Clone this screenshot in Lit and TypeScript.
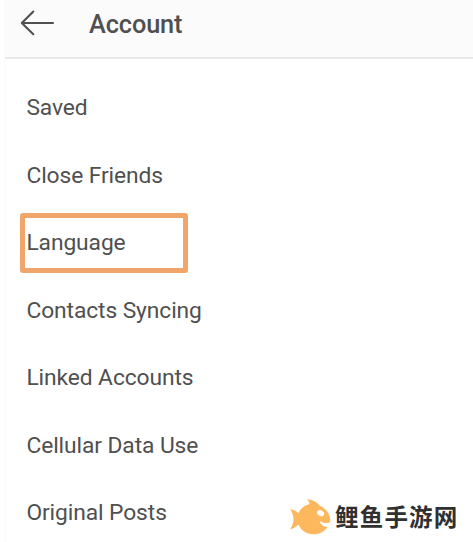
import { LitElement, html, css } from "lit";
import { customElement, property } from "lit/decorators.js";
import { classMap } from "lit/directives/class-map.js";

@customElement("settings-header")
class SettingsHeader extends LitElement {
  @property() heading = "";

  static styles = css`
    :host {
      display: flex;
      align-items: center;
      box-sizing: border-box;
      height: 59px;
      padding: 0 0 11px 15px;
      background: #fbfbfb;
      border-bottom: 2px solid #e9e9e8;
    }
    .back {
      width: 36px;
      height: 28px;
      flex: none;
    }
    .title {
      margin: 3px 0 0 33px;
      font: 500 25.3px/30px Roboto, sans-serif;
      letter-spacing: -0.1px;
      color: #505050;
    }
  `;

  render() {
    return html`
      <svg class="back" viewBox="0 0 36 28" fill="none" stroke="#505050" stroke-width="2.1"
        stroke-linecap="round" stroke-linejoin="round">
        <path d="M33 14H2M13.3 2.6L1.8 14L13.3 25.2" />
      </svg>
      <div class="title">${this.heading}</div>
    `;
  }
}

@customElement("site-mark")
class SiteMark extends LitElement {
  static styles = css`
    :host {
      display: flex;
      align-items: center;
    }
    .fish {
      width: 42px;
      height: 38px;
      flex: none;
    }
    .name {
      margin: -2px 0 0 4px;
      font: 700 23.5px/30px "Noto Sans CJK SC", sans-serif;
      letter-spacing: 1.2px;
      color: #303030;
      white-space: nowrap;
    }
  `;

  render() {
    return html`
      <svg class="fish" viewBox="0 0 42 38">
        <path fill="#fdb75c"
          d="M1 11.2C4.6 11.5 7.5 13.2 9.5 15.2C11.5 10.5 15.5 7.3 20.3 6.3C20.6 4.5 19.6 2.7 18 1.2C24 1.5 28.3 4.2 30.6 7.7C36.5 10.2 40.8 15 41.2 21.5L41.1 24.6C37.6 25.6 33.4 25 30.6 22.8C31.2 26.4 34.4 29 38.6 29C35.6 33.6 30.5 36.4 24.5 36.3C17.5 36.2 11.8 32.5 9.4 26.6C7.2 28.9 4.4 30.7 1.2 31.3C3.6 27.4 4.5 23.8 4.5 20.9C4.500 17.500 3.300 14.200 1 11.200Z" />
        <ellipse cx="31.600" cy="15.200" rx="3.700" ry="2.800" transform="rotate(30 31.600 15.200)" fill="#fff" />
      </svg>
      <div class="name">鲤鱼手游网</div>
    `;
  }
}

@customElement("app-root")
class AppRoot extends LitElement {
  static styles = css`
    :host {
      display: block;
      position: relative;
      box-sizing: border-box;
      height: 542px;
      padding-left: 4px;
      overflow: hidden;
      background: #fff;
    }
    .panel {
      height: 100%;
      box-sizing: border-box;
      border-left: 1px solid #fafafa;
    }
    .list {
      display: flex;
      flex-direction: column;
      padding-top: 15.4px;
    }
    .row {
      display: flex;
      align-items: center;
      box-sizing: border-box;
      height: 67.5px;
      flex: none;
      padding-left: 21.4px;
      font: 400 22.8px/30px Roboto, sans-serif;
      letter-spacing: -0.09px;
      color: #505050;
    }
    .row.marked {
      height: 60px;
      width: 168px;
      margin: 3.6px 0 3.9px 15px;
      padding: 0.5px 0 0 1.4px;
      border: 5px solid #f0a56b;
      border-radius: 3px;
    }
    .mark {
      position: absolute;
      left: 289px;
      top: 498px;
    }
  `;

  private items = [
    "Saved",
    "Close Friends",
    "Language",
    "Contacts Syncing",
    "Linked Accounts",
    "Cellular Data Use",
    "Original Posts",
  ];

  render() {
    return html`
      <div class="panel">
        <settings-header heading="Account"></settings-header>
        <div class="list">
          ${this.items.map(
            (item) => html`<div class=${classMap({ row: true, marked: item === "Language" })}>${item}</div>`
          )}
        </div>
      </div>
      <site-mark class="mark"></site-mark>
    `;
  }
}
